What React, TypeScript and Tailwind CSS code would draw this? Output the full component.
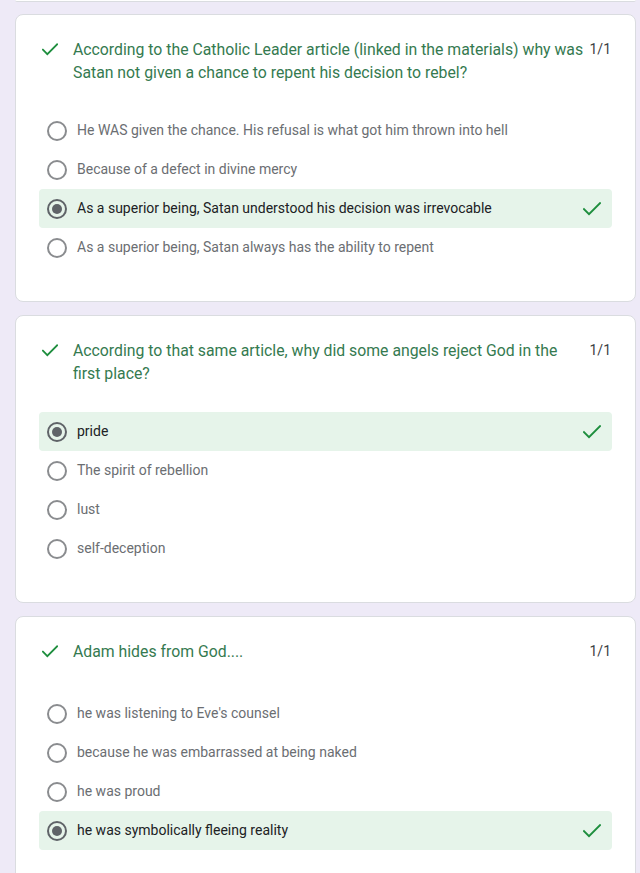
type Question = {
  title: string;
  points: string;
  options: string[];
  selected: number;
};

const questions: Question[] = [
  {
    title:
      "According to the Catholic Leader article (linked in the materials) why was Satan not given a chance to repent his decision to rebel?",
    points: "1/1",
    options: [
      "He WAS given the chance. His refusal is what got him thrown into hell",
      "Because of a defect in divine mercy",
      "As a superior being, Satan understood his decision was irrevocable",
      "As a superior being, Satan always has the ability to repent",
    ],
    selected: 2,
  },
  {
    title: "According to that same article, why did some angels reject God in the first place?",
    points: "1/1",
    options: ["pride", "The spirit of rebellion", "lust", "self-deception"],
    selected: 0,
  },
  {
    title: "Adam hides from God....",
    points: "1/1",
    options: [
      "he was listening to Eve's counsel",
      "because he was embarrassed at being naked",
      "he was proud",
      "he was symbolically fleeing reality",
    ],
    selected: 3,
  },
];

function CheckIcon({ className }: { className?: string }) {
  return (
    <svg viewBox="0 0 18 14" className={className} fill="none">
      <path d="M1 7.2 L6 12.2 L17 1.2" stroke="currentColor" strokeWidth="2" strokeLinecap="square" />
    </svg>
  );
}

function Radio({ checked }: { checked: boolean }) {
  return (
    <span
      className={
        "flex h-[20px] w-[20px] flex-shrink-0 items-center justify-center rounded-full border-2 " +
        (checked ? "border-[#5f6368]" : "border-[#8a8c8f]")
      }
    >
      {checked && <span className="h-[10px] w-[10px] rounded-full bg-[#5f6368]" />}
    </span>
  );
}

function QuestionCard({ q }: { q: Question }) {
  return (
    <div className="ml-[15px] w-[621px] rounded-lg border border-[#dadce0] bg-white px-[23px] pb-[34px] pt-[23px]">
      <div className="flex min-h-[27px] items-start">
        <div className="flex h-[23px] w-[34px] flex-shrink-0 items-center pl-[3px]">
          <CheckIcon className="h-[13px] w-[16px] text-[#1e8e3e]" />
        </div>
        <p className="flex-1 text-[15.8px] leading-[23px] text-[#357a50]">{q.title}</p>
        <span className="flex-shrink-0 pl-[2px] pr-[1px] text-[14px] leading-[23px] text-[#3c4043]">
          {q.points}
        </span>
      </div>

      <div className="mt-[27px] flex flex-col">
        {q.options.map((opt, i) => {
          const sel = i === q.selected;
          return (
            <div
              key={opt}
              className={
                "flex h-[39px] items-center rounded-[4px] pl-[8px] pr-[11px] " + (sel ? "bg-[#e6f4ea]" : "")
              }
            >
              <Radio checked={sel} />
              <span
                className={
                  "ml-[10px] flex-1 text-[14px] " + (sel ? "text-[#202124]" : "text-[#6b6e72]")
                }
              >
                {opt}
              </span>
              {sel && <CheckIcon className="h-[14px] w-[18px] text-[#1e8e3e]" />}
            </div>
          );
        })}
      </div>
    </div>
  );
}

export default function App() {
  return (
    <div className="min-h-screen overflow-hidden bg-[#eeeaf7] font-['Roboto','Liberation_Sans',sans-serif]">
      <div className="ml-[15px] h-[2px] w-[621px] rounded-b-lg border-b border-[#dadce0] bg-white" />
      <div className="mt-[12px] flex flex-col gap-[13px]">
        {questions.map((q) => (
          <QuestionCard key={q.title} q={q} />
        ))}
      </div>
    </div>
  );
}
